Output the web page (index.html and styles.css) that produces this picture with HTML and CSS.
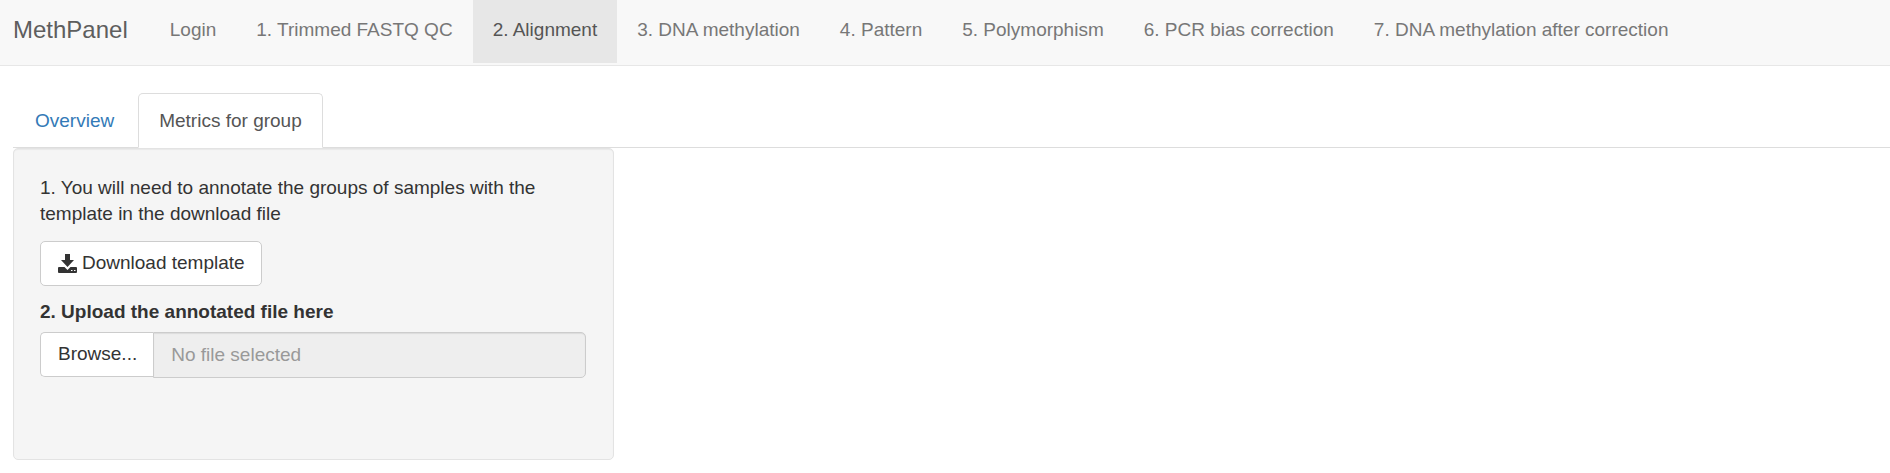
FILE: index.html
```
<!DOCTYPE html>
<html lang="en">
<head>
<meta charset="utf-8">
<title>MethPanel</title>
<meta name="viewport" content="width=device-width, initial-scale=1">
<link rel="stylesheet" href="styles.css">
</head>
<body>
<nav class="navbar">
  <a class="brand" href="#">MethPanel</a>
  <ul class="nav-list">
    <li><a class="nav-link" href="#">Login</a></li>
    <li><a class="nav-link" href="#">1. Trimmed FASTQ QC</a></li>
    <li><a class="nav-link active" href="#" aria-current="page">2. Alignment</a></li>
    <li><a class="nav-link" href="#">3. DNA methylation</a></li>
    <li><a class="nav-link" href="#">4. Pattern</a></li>
    <li><a class="nav-link" href="#">5. Polymorphism</a></li>
    <li><a class="nav-link" href="#">6. PCR bias correction</a></li>
    <li><a class="nav-link" href="#">7. DNA methylation after correction</a></li>
  </ul>
</nav>
<main class="content">
  <ul class="tabs">
    <li><a class="tab" href="#">Overview</a></li>
    <li><a class="tab active" href="#" aria-current="true">Metrics for group</a></li>
  </ul>
  <form class="well">
    <p class="hint">1. You will need to annotate the groups of samples with the template in the download file</p>
    <button class="btn" type="button">
      <svg class="icon" viewBox="0 0 19 19" aria-hidden="true">
        <path d="M7 0h5v6h4l-6.500 7L3 6h4z"/>
        <path fill-rule="evenodd" d="M1 13h5.500l3 3 3-3H18q1 0 1 1v4q0 1-1 1H1q-1 0-1-1v-4q0-1 1-1zM13 16v1h1.500v-1zM16 16v1h1.500v-1z"/>
      </svg>
      Download template
    </button>
    <label class="label" for="filename">2. Upload the annotated file here</label>
    <div class="input-group">
      <button class="btn browse" type="button">Browse...</button>
      <input class="filename" id="filename" type="text" placeholder="No file selected" readonly>
    </div>
  </form>
</main>
</body>
</html>
```
FILE: styles.css
```
* {
  box-sizing: border-box;
}

body {
  margin: 0;
  background: #fff;
  color: #333;
  font-family: "Liberation Sans", Arial, sans-serif;
  font-size: 19px;
  line-height: 26px;
}

a {
  text-decoration: none;
}

ul {
  display: flex;
  margin: 0;
  padding: 0;
  list-style: none;
}

.navbar {
  display: flex;
  align-items: flex-start;
  padding: 0 0 2px 13px;
  border-bottom: 1px solid #e7e7e7;
  background: #f8f8f8;
}

.brand {
  padding: 17px 22px 20px 0;
  color: #5e5e5e;
  font-size: 24px;
}

.nav-link {
  display: block;
  padding: 17px 20px 20px;
  color: #777;
}

.nav-link.active {
  background: #e7e7e7;
  color: #555;
}

.content {
  padding: 27px 0 14px 13px;
}

.tabs {
  gap: 3px;
  padding-left: 1px;
  border-bottom: 1px solid #ddd;
}

.tab {
  display: block;
  margin-bottom: -1px;
  padding: 14px 20px 13px;
  border: 1px solid transparent;
  border-radius: 5px 5px 0 0;
  color: #337ab7;
}

.tab.active {
  border-color: #ddd #ddd #fff;
  background: #fff;
  color: #555;
}

.well {
  width: 32%;
  padding: 26px 27px 81px 26px;
  border: 1px solid #e3e3e3;
  border-radius: 5px;
  background: #f5f5f5;
  box-shadow: inset 0 1px 1px rgba(0, 0, 0, 0.05);
}

.hint {
  margin: 0 0 14px;
}

.btn {
  display: flex;
  align-items: center;
  gap: 5px;
  padding: 8px 16px 9px 17px;
  border: 1px solid #ccc;
  border-radius: 5px;
  background: #fff;
  color: #333;
  font: inherit;
}

.icon {
  width: 19px;
  height: 19px;
  fill: #333;
}

.label {
  display: block;
  margin: 13px 0 7px;
  font-weight: bold;
}

.input-group {
  display: flex;
  align-items: flex-start;
}

.browse {
  border-right: 0;
  border-radius: 5px 0 0 5px;
}

.filename {
  flex: 1;
  min-width: 0;
  height: 46px;
  padding: 8px 17px;
  border: 1px solid #ccc;
  border-radius: 0 5px 5px 0;
  background: #eee;
  box-shadow: inset 0 1px 1px rgba(0, 0, 0, 0.08);
  color: #555;
  font: inherit;
}

.filename::placeholder {
  color: #999;
  opacity: 1;
}
```
